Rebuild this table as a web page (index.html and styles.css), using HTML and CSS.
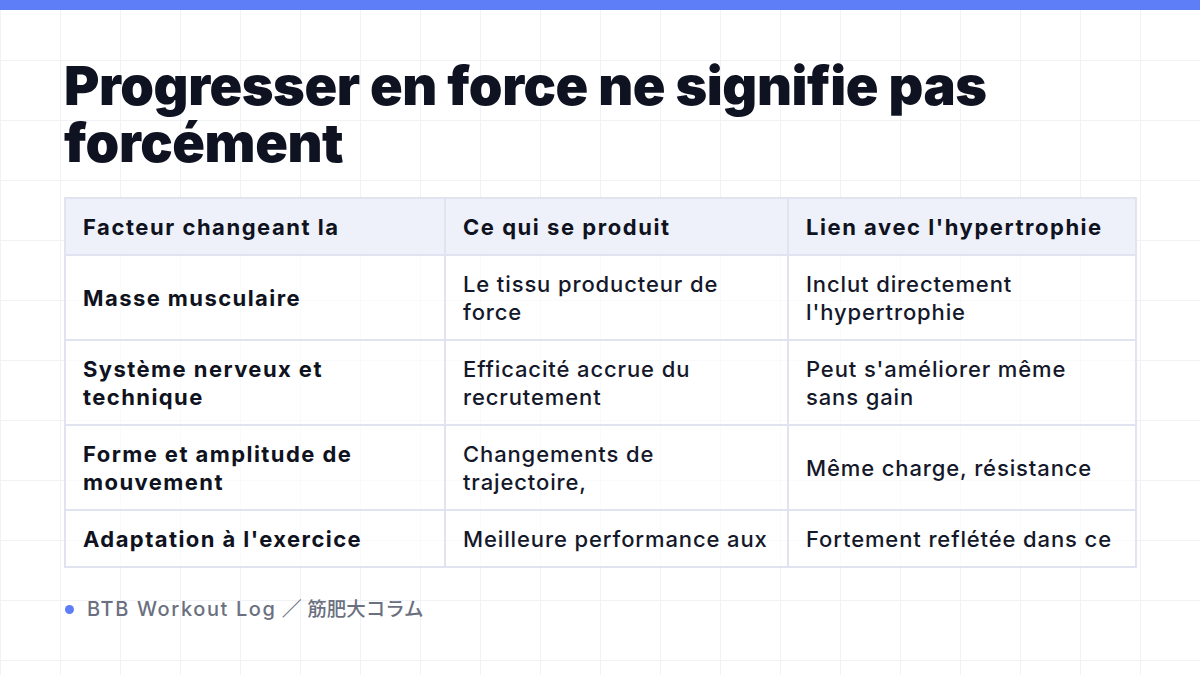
FILE: index.html
```html
<!DOCTYPE html>
<html lang="fr">
<head>
<meta charset="utf-8">
<link rel="stylesheet" href="styles.css">
</head>
<body>
<div class="topbar"></div>
<main class="slide">
  <h1 class="title">Progresser en force ne signifie pas<br>forcément</h1>
  <table class="grid-table">
    <colgroup>
      <col class="c1"><col class="c2"><col class="c3">
    </colgroup>
    <thead>
      <tr>
        <th>Facteur changeant la</th>
        <th>Ce qui se produit</th>
        <th>Lien avec l'hypertrophie</th>
      </tr>
    </thead>
    <tbody>
      <tr>
        <td class="rowhead">Masse musculaire</td>
        <td>Le tissu producteur de<br>force</td>
        <td>Inclut directement<br>l'hypertrophie</td>
      </tr>
      <tr>
        <td class="rowhead">Système nerveux et<br>technique</td>
        <td>Efficacité accrue du<br>recrutement</td>
        <td>Peut s'améliorer même<br>sans gain</td>
      </tr>
      <tr>
        <td class="rowhead">Forme et amplitude de<br>mouvement</td>
        <td>Changements de<br>trajectoire,</td>
        <td>Même charge, résistance</td>
      </tr>
      <tr>
        <td class="rowhead">Adaptation à l'exercice</td>
        <td>Meilleure performance aux</td>
        <td>Fortement reflétée dans ce</td>
      </tr>
    </tbody>
  </table>
  <footer class="footer">
    <span class="dot"></span>
    <span class="footer-text"><span class="footer-latin">BTB Workout Log</span> ／ <span class="footer-cjk">筋肥大コラム</span></span>
  </footer>
</main>
</body>
</html>
```

FILE: styles.css
```css
html, body {
  margin: 0;
  padding: 0;
}
body {
  width: 1200px;
  height: 675px;
  overflow: hidden;
  background-color: #ffffff;
  background-image:
    linear-gradient(to right, #f1f2f6 1px, transparent 1px),
    linear-gradient(to bottom, #f1f2f6 1px, transparent 1px);
  background-size: 60px 60px;
  background-position: 0 0;
  font-family: Inter, "Noto Sans CJK JP", sans-serif;
  color: #111827;
}
.topbar {
  height: 10px;
  background: #5d7ef6;
}
.slide {
  padding: 47px 64px 0 64px;
}
.title {
  margin: 0;
  font-size: 54px;
  line-height: 57px;
  font-weight: 900;
  letter-spacing: -0.008em;
  color: #0f1220;
}
.grid-table {
  margin-top: 26px;
  width: 1071px;
  border-collapse: collapse;
  table-layout: fixed;
  font-size: 22px;
  line-height: 28px;
}
.c1 { width: 380px; }
.c2 { width: 343px; }
.c3 { width: 348px; }
.grid-table th,
.grid-table td {
  border: 2px solid #e1e4f0;
  padding: 14px 17px 13px 17px;
  text-align: left;
  vertical-align: middle;
  white-space: nowrap;
}
.grid-table th {
  background: rgba(236, 239, 250, 0.9);
  font-weight: 700;
  letter-spacing: 0.07em;
  color: #0f1220;
}
.grid-table td {
  font-weight: 500;
  letter-spacing: 0.04em;
  color: #14182a;
  background: rgba(255, 255, 255, 0.6);
}
.grid-table td.rowhead {
  font-weight: 700;
  letter-spacing: 0.065em;
  color: #0f1220;
}
.footer {
  display: flex;
  align-items: center;
  gap: 13px;
  margin-top: 27px;
  margin-left: 1px;
}
.dot {
  width: 9px;
  height: 9px;
  border-radius: 50%;
  background: #5d7ef6;
}
.footer-text {
  font-size: 20px;
  line-height: 28px;
  font-weight: 500;
  color: #6b7080;
}
.footer-latin {
  letter-spacing: 0.08em;
}
.footer-cjk {
  font-size: 19.5px;
}
```
